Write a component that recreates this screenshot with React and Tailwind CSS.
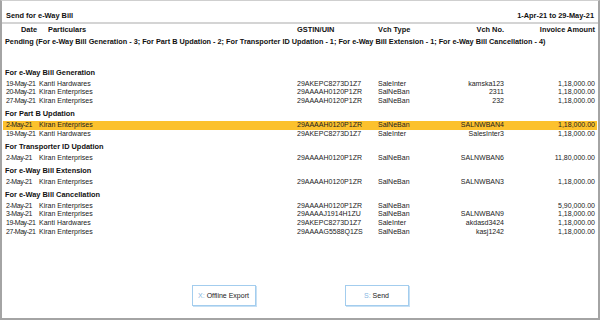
import React from "react";

/* ================= DATA ================= */
const sections = [
  {
    title: "For e-Way Bill Generation",
    rows: [
      ["19-May-21", "Kanti Hardwares", "29AKEPC8273D1Z7", "SaleInter", "kamska123", "1,18,000.00"],
      ["20-May-21", "Kiran Enterprises", "29AAAAH0120P1ZR", "SalNeBan", "2311", "1,18,000.00"],
      ["27-May-21", "Kiran Enterprises", "29AAAAH0120P1ZR", "SalNeBan", "232", "1,18,000.00"],
    ],
  },
  {
    title: "For Part B Updation",
    rows: [
      ["2-May-21", "Kiran Enterprises", "29AAAAH0120P1ZR", "SalNeBan", "SALNWBAN4", "1,18,000.00", true],
      ["19-May-21", "Kanti Hardwares", "29AKEPC8273D1Z7", "SaleInter", "SalesInter3", "1,18,000.00"],
    ],
  },
  {
    title: "For Transporter ID Updation",
    rows: [
      ["2-May-21", "Kiran Enterprises", "29AAAAH0120P1ZR", "SalNeBan", "SALNWBAN6", "11,80,000.00"],
    ],
  },
  {
    title: "For e-Way Bill Extension",
    rows: [
      ["2-May-21", "Kiran Enterprises", "29AAAAH0120P1ZR", "SalNeBan", "SALNWBAN3", "1,18,000.00"],
    ],
  },
  {
    title: "For e-Way Bill Cancellation",
    rows: [
      ["2-May-21", "Kiran Enterprises", "29AAAAH0120P1ZR", "SalNeBan", "", "5,90,000.00"],
      ["3-May-21", "Kiran Enterprises", "29AAAAJ1914H1ZU", "SalNeBan", "SALNWBAN9", "1,18,000.00"],
      ["19-May-21", "Kanti Hardwares", "29AKEPC8273D1Z7", "SaleInter", "akdasd3424", "1,18,000.00"],
      ["27-May-21", "Kiran Enterprises", "29AAAAG5588Q1ZS", "SalNeBan", "kasj1242", "1,18,000.00"],
    ],
  },
];

// date | particulars | gstin | vch type | vch no | amount
const cols = "grid grid-cols-[34px_259px_81px_66px_60px_91px]";

function Row({ r }) {
  const active = r[6];
  return (
    <div
      className={`${cols} mx-[1px] px-[1px] h-[8.75px] leading-[8.75px] text-[7px] text-[#222] whitespace-nowrap ${
        active ? "bg-[#fcc12d]" : ""
      }`}
    >
      <div className="pl-[2px] tracking-[-0.45px]">{r[0]}</div>
      <div className="pl-[1px]">{r[1]}</div>
      <div>{r[2]}</div>
      <div>{r[3]}</div>
      <div className="text-right">{r[4]}</div>
      <div className="text-right">{r[5]}</div>
    </div>
  );
}

export default function App() {
  return (
    <div
      className="w-[600px] h-[320px] bg-white flex flex-col border-t border-t-[#cfcfcf] border-x-2 border-b-2 border-[#a4a4a4] overflow-hidden"
      style={{ fontFamily: '"Liberation Sans", Arial, sans-serif' }}
    >
      {/* TITLE */}
      <div className="flex justify-between items-center px-[3px] pt-[8px] h-[21px] text-[7.4px] font-bold text-[#111]">
        <span className="pl-[1px]">Send for e-Way Bill</span>
        <span className="pr-[1px]">1-Apr-21 to 29-May-21</span>
      </div>

      {/* COLUMN HEADER */}
      <div className="border-t-2 border-[#d4d4d4]">
        <div className={`${cols} mx-[1px] px-[1px] h-[11px] leading-[11px] text-[7.4px] font-bold text-[#111] whitespace-nowrap`}>
          <div className="text-right pr-[1px]">Date</div>
          <div className="pl-[10px]">Particulars</div>
          <div>GSTIN/UIN</div>
          <div>Vch Type</div>
          <div className="text-right">Vch No.</div>
          <div className="text-right">Invoice Amount</div>
        </div>
      </div>

      {/* PENDING SUMMARY */}
      <div className="px-[3px] pt-[2px] h-[12px] leading-[10px] text-[7.3px] font-bold text-[#111] whitespace-nowrap">
        Pending (For e-Way Bill Generation - 3; For Part B Updation - 2; For Transporter ID Updation - 1; For e-Way Bill Extension - 1; For e-Way Bill Cancellation - 4)
      </div>

      {/* SECTIONS */}
      <div className="pt-[17.4px]">
        {sections.map((s) => (
          <div key={s.title}>
            <div className="px-[3px] pt-[3.6px] pb-[1.6px] leading-[10px] text-[7.4px] font-bold text-[#111]">
              {s.title}
            </div>
            {s.rows.map((r, i) => (
              <Row key={i} r={r} />
            ))}
          </div>
        ))}
      </div>

      {/* BUTTONS */}
      <div className="flex-1 flex items-end justify-center gap-[89px] pb-[12px]">
        <button className="w-[64px] h-[21px] border border-[#a3cdee] shadow-[1px_1px_0_#c7e0f4] bg-white text-[7px] text-[#222] leading-none">
          <span className="text-[#86b6e2]">X:</span> Offline Export
        </button>
        <button className="w-[64px] h-[21px] border border-[#a3cdee] shadow-[1px_1px_0_#c7e0f4] bg-white text-[7px] text-[#222] leading-none">
          <span className="text-[#86b6e2]">S:</span> Send
        </button>
      </div>
    </div>
  );
}
